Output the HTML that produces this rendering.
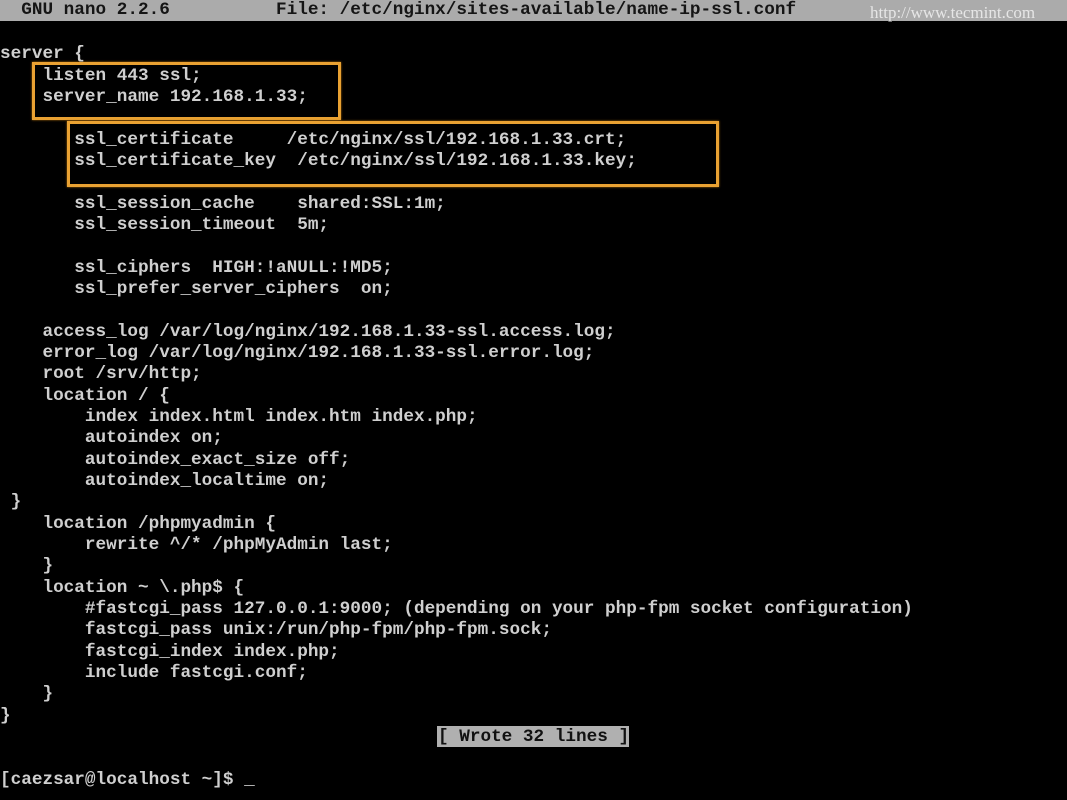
<!DOCTYPE html>
<html><head><meta charset="utf-8"><style>
html,body{margin:0;padding:0;background:#000;width:1067px;height:800px;overflow:hidden}
body{position:relative;font-family:"Liberation Mono",monospace;font-size:17.7px;font-weight:bold;color:#cfcfcf}
.r{position:absolute;left:0;height:21.33px;line-height:21.33px;white-space:pre;margin-top:1.5px}
#hdr{position:absolute;left:0;top:0;width:1067px;height:21px;background:#ababab}
#hdr .r{color:#151515;top:0;margin-top:0}
.wm{position:absolute;left:870px;top:3px;font-family:"Liberation Serif",serif;font-weight:normal;font-size:17px;color:#e6e6e6}
.box{position:absolute;border:3px solid #e9a132;box-shadow:0 0 2px #b57010}
.wrote{position:absolute;left:437px;top:726px;width:192px;height:21px;background:#b0b0b0}
</style></head><body>
<div id="hdr"><div class="r">  GNU nano 2.2.6          File: /etc/nginx/sites-available/name-ip-ssl.conf</div></div>
<div class="wm">http://www.tecmint.com</div>
<div class="box" style="left:32px;top:62px;width:303px;height:52px"></div>
<div class="box" style="left:67px;top:121px;width:646px;height:60px"></div>
<div class="r" style="top:42.7px">server {</div>
<div class="r" style="top:64px">    listen 443 ssl;</div>
<div class="r" style="top:85.3px">    server_name 192.168.1.33;</div>
<div class="r" style="top:128px">       ssl_certificate     /etc/nginx/ssl/192.168.1.33.crt;</div>
<div class="r" style="top:149.3px">       ssl_certificate_key  /etc/nginx/ssl/192.168.1.33.key;</div>
<div class="r" style="top:192px">       ssl_session_cache    shared:SSL:1m;</div>
<div class="r" style="top:213.3px">       ssl_session_timeout  5m;</div>
<div class="r" style="top:256px">       ssl_ciphers  HIGH:!aNULL:!MD5;</div>
<div class="r" style="top:277.3px">       ssl_prefer_server_ciphers  on;</div>
<div class="r" style="top:320px">    access_log /var/log/nginx/192.168.1.33-ssl.access.log;</div>
<div class="r" style="top:341.3px">    error_log /var/log/nginx/192.168.1.33-ssl.error.log;</div>
<div class="r" style="top:362.7px">    root /srv/http;</div>
<div class="r" style="top:384px">    location / {</div>
<div class="r" style="top:405.3px">        index index.html index.htm index.php;</div>
<div class="r" style="top:426.7px">        autoindex on;</div>
<div class="r" style="top:448px">        autoindex_exact_size off;</div>
<div class="r" style="top:469.3px">        autoindex_localtime on;</div>
<div class="r" style="top:490.7px"> }</div>
<div class="r" style="top:512px">    location /phpmyadmin {</div>
<div class="r" style="top:533.3px">        rewrite ^/* /phpMyAdmin last;</div>
<div class="r" style="top:554.7px">    }</div>
<div class="r" style="top:576px">    location ~ \.php$ {</div>
<div class="r" style="top:597.3px">        #fastcgi_pass 127.0.0.1:9000; (depending on your php-fpm socket configuration)</div>
<div class="r" style="top:618.7px">        fastcgi_pass unix:/run/php-fpm/php-fpm.sock;</div>
<div class="r" style="top:640px">        fastcgi_index index.php;</div>
<div class="r" style="top:661.3px">        include fastcgi.conf;</div>
<div class="r" style="top:682.7px">    }</div>
<div class="r" style="top:704px">}</div>
<div class="wrote"></div>
<div class="r" style="top:725.3px;left:438px;color:#111">[ Wrote 32 lines ]</div>
<div class="r" style="top:768px">[caezsar@localhost ~]$ _</div>
</body></html>
